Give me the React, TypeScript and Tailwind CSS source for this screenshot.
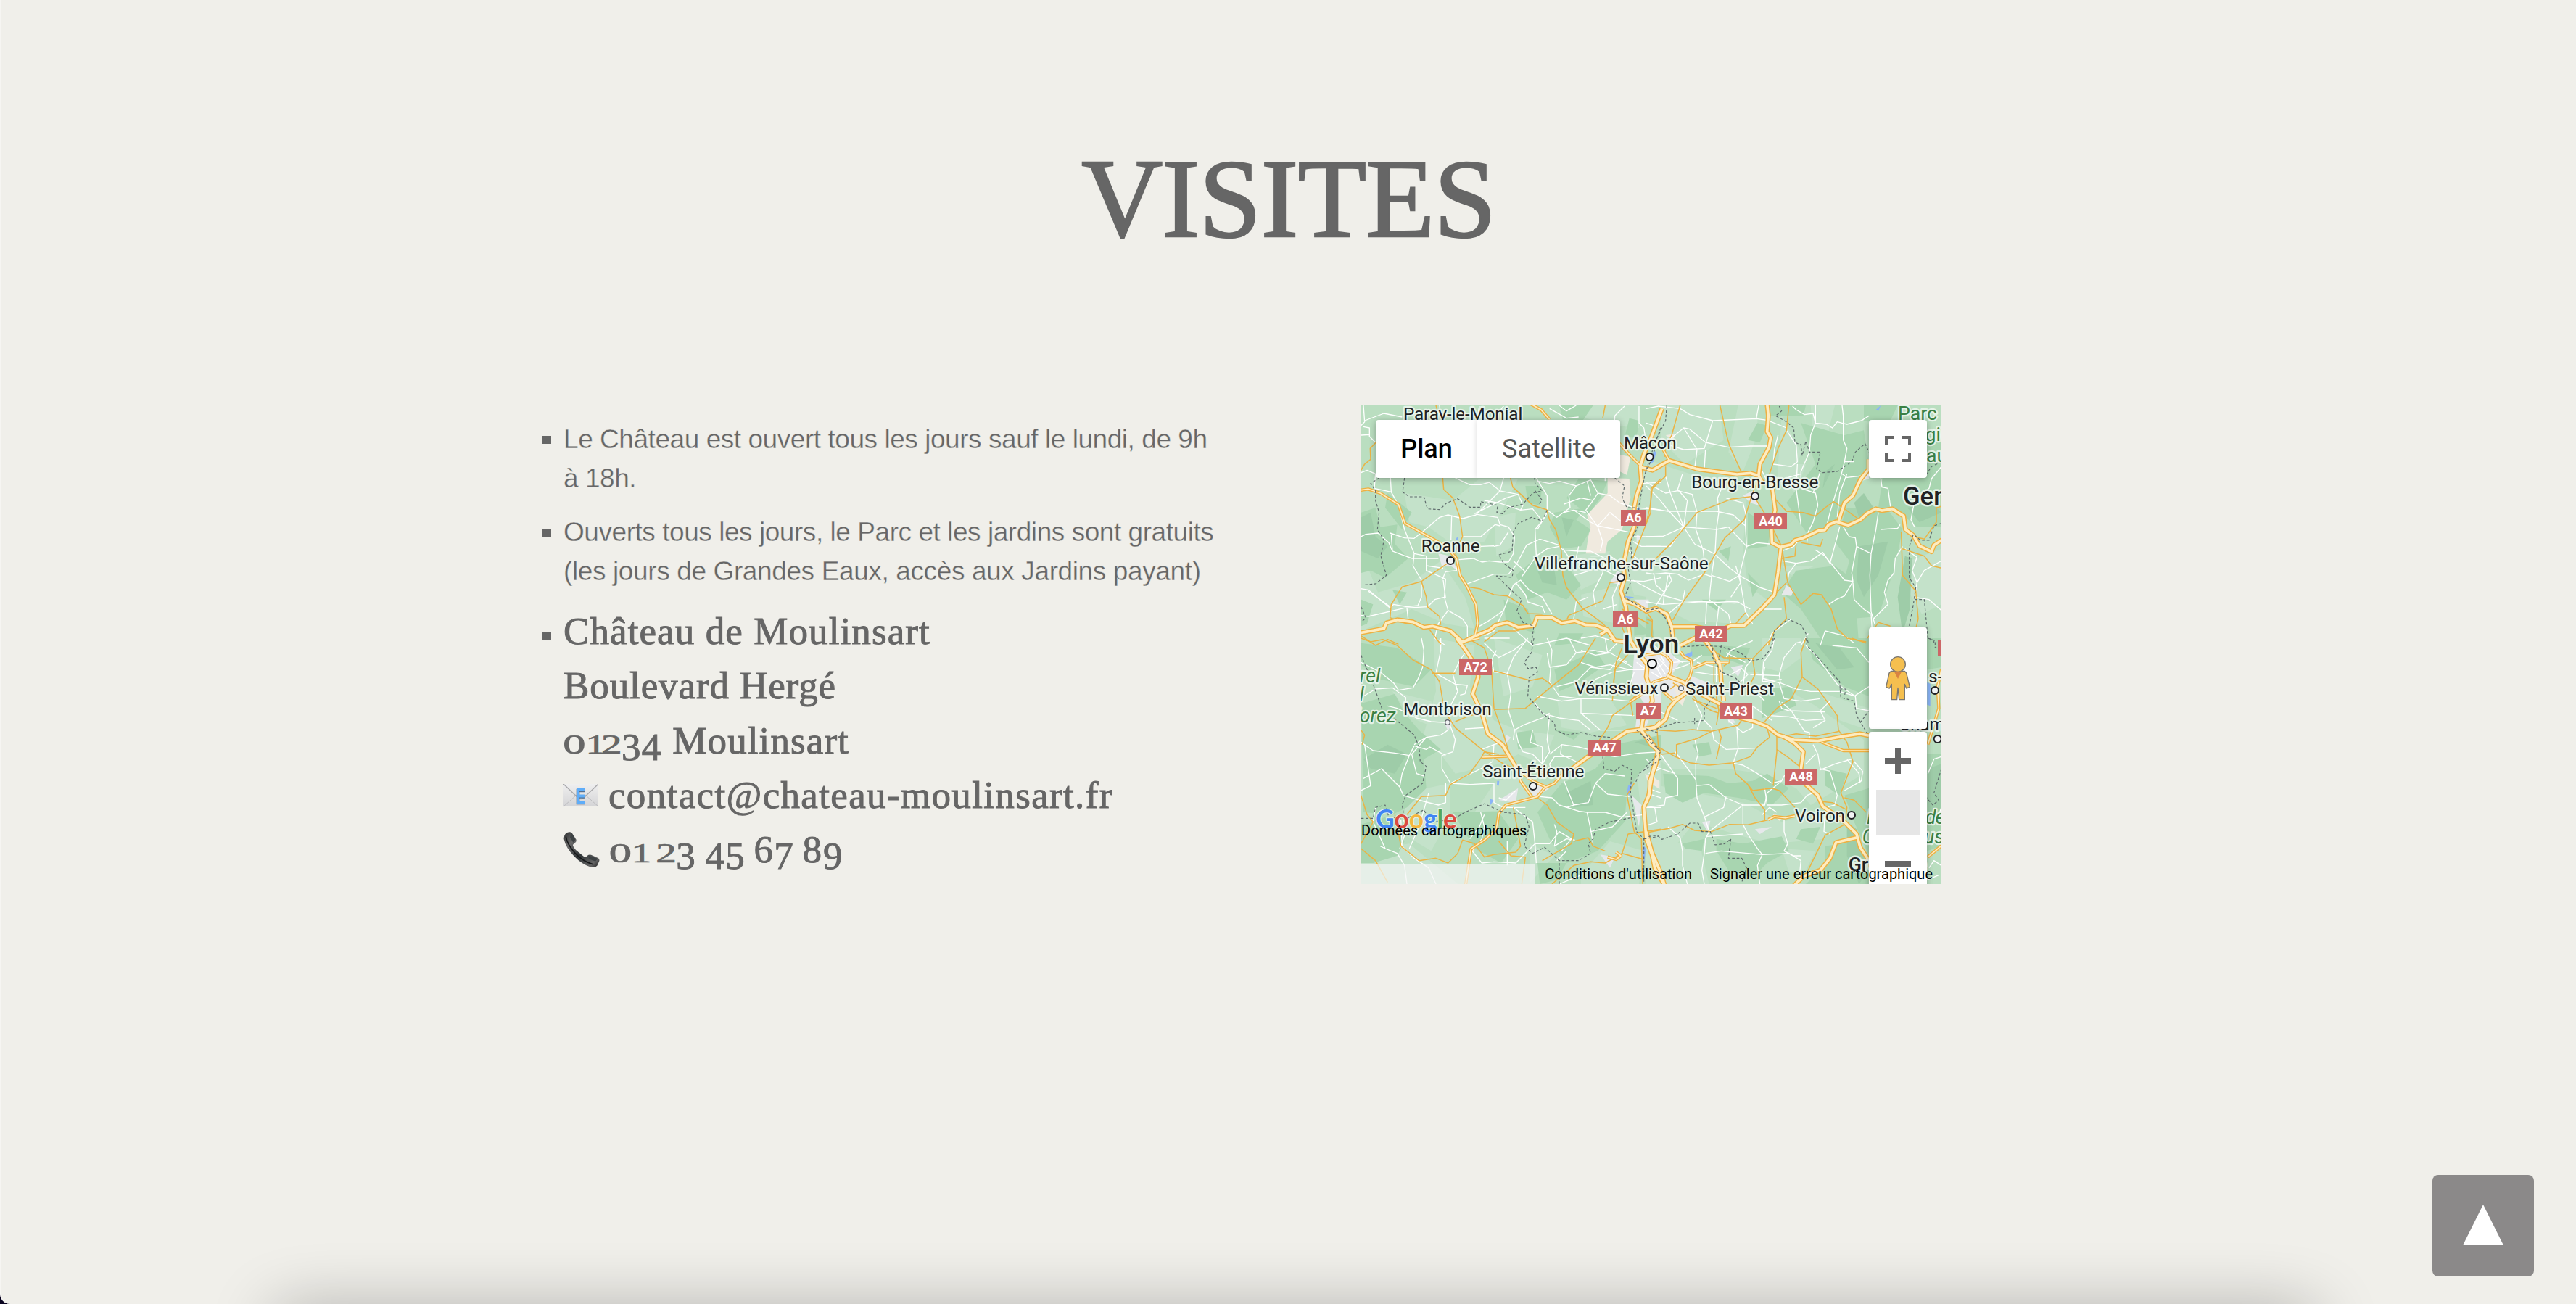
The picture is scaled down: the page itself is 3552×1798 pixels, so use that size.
import React from "react";

type Quad = "A" | "B" | "C" | "D" | "E";

const origin: Record<Quad, string> = {
  A: "translate(-17 -19) scale(0.33333)",
  B: "translate(393 -19) scale(0.33333)",
  C: "translate(-17 321) scale(0.33333)",
  D: "translate(393 321) scale(0.33333)",
  E: "translate(303 221) scale(0.33333)",
};

const wide: [Quad, string][] = [
  ["A", "M45 998L145 980L155 957L200 944L265 953L310 975L345 970L420 990L470 1037L525 1010L583 985L605 967L655 955L700 975L765 968L778 933L840 935L880 957L935 948L980 965L1020 966L1070 985L1100 1030L1150 1035M1070 985L1040 1005"],
  ["A", "M1295 70L1250 190L1220 260L1205 310L1210 370L1190 430L1180 480L1180 560L1155 620L1135 720L1140 770L1125 825L1145 890L1155 960L1165 1030L1190 1070L1235 1130L1230 1180L1250 1240L1255 1280L1215 1360L1210 1400L1250 1460L1280 1485L1255 1580L1240 1670L1220 1720L1230 1850L1255 1920L1265 1970L1310 2050"],
  ["A", "M1205 312L1255 325L1325 285L1440 320L1605 342L1660 337L1695 348L1710 375L1750 385L1763 490L1748 560L1750 625L1785 643L1830 632L1845 615L1880 605L1945 574L1968 573L1985 550L2015 538L2065 553L2115 530L2145 503L2180 485L2205 492L2248 485L2295 515L2302 570L2335 595L2360 638L2410 662L2420 635L2455 612"],
  ["B", "M500 50L505 100L500 165L515 190L508 230L470 300L465 345"],
  ["B", "M795 538L820 460L855 430L885 365L921 320L921 280"],
  ["B", "M557 643L545 750L530 840L480 895L405 967L350 968L300 990L200 972L105 972L85 920L40 897L0 908L-45 880L-100 860"],
  ["B", "M105 972L112 1040"],
  ["B", "M140 1050L220 1010L270 985"],
  ["C", "M445 0L480 45L530 120L535 160L512 230L550 310L575 395L635 440L665 490L705 555"],
  ["C", "M1290 345L1265 370L1190 380L1150 385L1090 425L1040 460L990 490L955 515L930 535L885 560"],
  ["D", "M0 375L45 365L80 335L95 290L120 260L165 225M85 155L150 180L215 225L320 280L390 330L450 345L500 365L545 400L610 420L710 425L800 408L885 395L921 403"],
  ["D", "M0 400L50 470L40 520L15 590L15 640L0 680"],
  ["D", "M565 405L615 435L650 470L640 540L655 600L710 650L730 695L820 760L870 810L885 865L915 910L940 960"],
  ["D", "M870 825L785 845L760 910L720 960L650 985L610 1025"],
  ["D", "M240 5L280 60L305 110L310 180L320 260"],
  ["D", "M0 800L25 890L60 970L75 1020"],
];

const medium: [Quad, string][] = [
  ["A", "M45 408L80 403L130 420L205 467L232 545L345 608L400 640L445 690L460 760L488 805L525 880L533 960L520 1015"],
  ["A", "M1115 210L1160 260L1205 305M750 50L795 75L830 115"],
  ["B", "M70 240L95 285"],
  ["C", "M755 655L710 590L705 550L760 590L815 615"],
  ["C", "M885 560L850 600L810 618L780 655L650 690L620 725L610 790L560 835L505 872L495 940L483 1020"],
  ["C", "M550 492L655 488M1070 905L1105 915L1125 900L1105 885M470 15L540 0M1080 0L1140 20"],
  ["D", "M725 430L815 465L925 465M505 750L530 738L575 743L615 735"],
  ["D", "M1221 130L1205 200L1210 290L1165 440M1225 855L1165 905"],
  ["E", "M355 375L375 400L370 440L355 465L300 480M410 355L425 375L455 390L460 425L450 460L435 480M460 425L520 400L610 400M300 480L285 510L200 565M265 370L330 360L355 375M340 520L380 555L420 535"],
];

const orange: [Quad, string][] = [
  ["A", "M112 210L88 235L90 280L65 300L50 325M388 357L392 405L430 440L458 515L470 600L440 660L445 690M668 357L678 395L760 470L818 488L830 530L855 570L878 655L885 760L900 810L965 895L1045 955L1075 985"],
  ["A", "M490 808L540 815L600 840L655 845L720 885L740 918L800 920M405 712L300 785L220 808L175 880L170 935L240 960M300 785L320 850L325 890L375 930L380 965M360 57L365 75M1060 57L1050 110M1290 360L1250 400L1248 500L1170 700"],
  ["A", "M50 1010L110 1050L160 1025L205 1045M330 980L360 1020L380 1045M560 1035L620 990L690 990L765 968M903 940L910 925L960 905L990 890L1050 865L1080 790L1125 785M1130 900L1240 960"],
  ["B", "M140 57L105 180L80 230L75 270M305 57L335 190L345 225L392 330M590 57L580 160L545 235L510 340M470 350L440 420L405 530L325 605L240 750L155 865L110 945"],
  ["B", "M80 310L80 350L25 400L15 480L0 545M450 432L350 445L210 500L110 620L0 730M450 440L500 520M520 430L580 495L650 500L700 515L740 480L775 455L820 485L875 525M520 560L560 640L585 790L640 880L690 835L725 840L765 900L790 980L830 1020L910 1035"],
  ["B", "M560 690L615 680L620 630M640 625L720 640L730 610M570 850L580 940L530 990L505 1050M530 840L580 790M410 915L370 960M0 940L25 950M1221 475L1200 480L1200 540L1150 610L1110 600M1055 580L1060 760L1115 825L1125 940L1110 1000M1060 650L1150 680L1180 720L1221 730M915 1020L960 955L1010 970"],
  ["C", "M50 0L90 15L140 5L200 30L265 90L340 130L375 180L395 300L440 370L550 460L640 520L700 545M345 145L440 145M490 0L560 40L590 130L600 290L640 400L665 480M600 295L730 290L850 190L950 110L1020 0M600 135L750 175L800 165L840 195"],
  ["C", "M440 345L500 320L550 310M420 605L500 560L550 490L560 470L620 480M420 605L400 650L300 655L240 730M50 650L75 730L100 760L50 850M50 870L110 920L160 1010M190 730L215 860L290 920L360 910L410 930L450 890L470 835L520 850L560 905L600 895L690 885L710 860L680 700"],
  ["C", "M780 660L820 690L860 760L930 810L920 850L800 920M620 840L670 900L730 905L715 1017M840 1017L930 940L1000 925L1060 930L1130 890L1220 915M930 840L990 825L1010 860L1060 880M1130 890L1155 810L1290 790M1030 430L1070 370L1090 320L1160 270L1210 200M1160 60L1100 130L1090 260M1180 600L1150 650L1180 800L1210 830L1215 1017M50 380L65 400L55 440"],
  ["D", "M45 380L50 450L120 490L180 515L260 525L360 515L430 490L460 450L510 410L500 370L450 345M50 380L120 385L190 378L270 385L380 360L400 330M270 385L210 415L125 440L125 490M300 380L310 410L290 500M360 515L370 560L420 605L450 660L490 710L490 750M420 605L440 630L520 620L550 630L615 700"],
  ["D", "M540 405L540 470L525 610M540 460L590 495L640 535M660 0L640 60L645 160L600 250L540 290L490 345M645 160L710 210L790 320L795 380L830 430L855 510L805 640L830 700L825 745M570 405L620 395L700 405L800 385M820 660L860 670L910 720M720 675L770 680L830 710M740 815L660 980M740 815L830 765"],
  ["D", "M0 805L100 785L150 770L200 795L270 800L345 770L420 772L510 750M245 30L320 80L440 85L520 0M440 85L450 150L430 190M345 70L345 100L320 115M280 60L280 180L300 300L290 360M190 250L270 300L300 310M850 0L910 20M60 480L120 475"],
  ["E", "M150 205L180 280M295 225L293 290L320 320M205 565L215 620M440 500L480 560L560 590M560 540L570 600M170 340L145 400L135 480L150 540M270 190L295 225M380 485L420 510M370 510L395 490"],
];

const white: [Quad, string][] = [
  ["A", "M60 57L65 125L50 140M65 120L145 90L220 105M60 145L85 150L85 185L110 210M50 180L85 178M50 335L75 325L110 340L105 400L175 415L172 357M175 415L205 470L230 570L270 670L265 720L300 780L300 850L285 885L240 890L185 880L170 895L80 820L50 815"],
  ["A", "M440 357L500 385L545 385L580 375L625 410L525 510L470 525L410 510L375 520L310 575L270 607L230 605L170 585M425 515L422 615M620 410L700 425L650 440L520 505M700 425L720 470L710 490L620 460L560 450M710 490L760 485L800 535L770 570L775 680L730 745L715 765"],
  ["A", "M530 508L615 520L625 550L660 560L685 600L680 670L660 705L625 705L580 700L550 705L515 690L455 695M470 600L545 600L605 550L625 555M600 640L625 635L660 580M545 640L600 638M625 410L640 357"],
  ["A", "M50 600L70 590L120 585L165 625L180 660L260 690L370 690M270 670L320 680L320 740L400 775L395 850L355 860L325 890L230 895L80 930L50 925M395 850L410 905L470 940L490 970L490 1020M170 890L80 825M320 720L390 730M180 660L175 590M450 700L445 740L400 745L385 780M390 780L400 855"],
  ["A", "M490 795L600 755L660 755L690 720L735 635L790 610L870 635L885 655L950 660L1000 660L1060 690M680 800L665 840L640 905L605 930L575 950L540 970M690 790L730 840L740 870L800 890L810 915M680 800L710 780L745 820L800 850L840 920M730 745L680 700"],
  ["A", "M775 357L820 430L820 500L800 535M780 370L830 380L870 370L940 390L910 430L915 480L860 520L820 490M940 390L1000 365L1030 420L1010 450L960 440L890 465M1030 420L1080 430L1120 460L1180 480M1010 450L980 490L1030 560L1050 620L1040 660M930 490L1000 540L1030 555L1155 580M1030 555L1080 500L1130 540M1000 430L985 370M890 500L930 490L980 500"],
  ["A", "M820 500L780 570M870 640L820 650L775 680M885 650L920 700L960 690L990 720L1060 740L1120 770M1060 690L1050 750L1010 830L1020 890M930 760L1000 740M950 640L940 690M1120 780L1090 850L1095 905M1095 200L1100 100L1140 60M1200 60L1200 130L1220 150L1225 180M1170 600L1290 600M1175 620L1210 640L1290 640M1150 650L1200 700L1290 700M1130 780L1220 785L1290 770M1190 480L1290 490M1210 380L1290 375M1060 370L1060 300"],
  ["A", "M830 70L900 110L950 105M870 57L900 80L940 57M640 60L600 110M540 60L530 110M375 57L380 110M1140 720L1080 680L1000 680M930 940L940 870L990 850M240 895L245 940M640 905L600 990L560 1010M410 905L370 960L355 1020L400 1050M680 980L760 1050L900 1020L1000 1050"],
  ["B", "M0 70L50 60L140 70L180 95L275 120L455 112L465 57M275 120L240 235L155 240L75 215L155 150L210 240L200 320M155 150L180 155L245 210L340 230L430 225L510 225M455 112L500 118L580 150M480 330L500 370M0 130L30 140M245 240L240 320"],
  ["B", "M0 375L80 420L130 410L190 425L210 500L205 570L235 655L240 700M0 480L90 495L150 495L290 495L360 510L410 555L415 640L385 760L410 910L440 960M0 600L70 598L155 560L290 570L300 500L295 440L330 355M155 560L90 490L50 440L0 390M155 560L100 640L0 640M155 560L200 630L280 670L345 730L385 760L470 810L530 830"],
  ["B", "M155 560L170 450L130 405L150 340M290 570L285 660L270 760L345 785L385 760M95 495L155 560L100 420L80 350M0 750L30 755L80 750L130 755L175 780L240 755L270 765L260 860L340 920L350 960M30 750L40 800L75 830L105 780L95 755M75 830L70 880L150 875L280 865L380 870L430 900M415 640L460 625L510 630M330 440L400 460L410 500L410 555M290 570L340 560L415 640M0 870L70 880"],
  ["B", "M580 160L620 220L625 290L600 310L525 300M525 300L530 240L545 180M605 60L620 75L655 95L690 90L700 130L680 180L675 250L640 330L640 400L700 420L710 470L690 540L670 580L665 620M700 57L700 130L745 135L770 150L790 125L830 135L890 120L921 100M810 57L815 100L815 200L830 235L820 290L860 290M525 370L570 360L640 340"],
  ["B", "M820 290L805 350L760 500L745 560M830 340L800 420L790 520M720 330L690 420M810 340L830 355L921 345M970 357L975 395L1000 400L1010 475M815 560L840 600L865 605L870 640L930 670L925 760L930 910L945 960M870 640L850 750L855 785L820 845L785 860L755 880M700 655L740 680L820 780L855 785M960 500L950 570L930 670M970 570L1040 565L1050 550M560 660L610 640L635 610M640 550L620 400L625 300"],
  ["B", "M585 780L590 750L620 710L680 700L730 665L760 710L790 600L800 560M1221 310L1180 360L1170 400L1110 450L1095 530L1110 560M1070 650L1120 685L1100 740L1120 790L1110 850L1170 860L1221 905M1120 790L1150 740L1221 700M1060 640L1030 690L1025 750L1000 780L985 830L1000 880L940 940M855 790L860 860L900 900L930 920L935 1000L980 990M560 900L480 900M600 940L520 1000L500 1050M740 990L720 1050M740 990L820 1010L860 1040M640 1050L670 1000M560 700L620 710"],
  ["C", "M300 0L310 50L305 120L285 170L265 205L205 215L185 185L130 140L50 100M380 0L380 50L360 145L440 190L450 220L420 280L415 350L440 420L430 470L385 485L385 540L420 600L500 605L600 600M415 350L340 345L280 330L200 290L160 280M60 240L110 210L180 205L235 245L230 320M50 430L100 465L190 475L250 485L270 445L320 460L335 450L400 485"],
  ["C", "M250 485L220 560L210 615L225 650L310 675L370 690L400 680L400 600M270 440L320 410L380 400L410 380M65 440L90 610L50 630M60 580L135 540L210 615M320 410L260 480L280 560L310 570M110 700L100 760L150 870L130 860M150 870L200 890L230 940L240 1017M215 750L220 860L270 910L330 950L360 1017M330 640L290 780L250 870M225 750L240 790L210 870"],
  ["C", "M440 190L490 195L480 230L460 235M450 220L430 150L460 90L480 60M480 375L560 370M610 50L590 90L600 140L655 145L670 230L660 300L685 380L680 420M740 0L680 80L655 145M560 20L620 80L680 50L720 20M685 380L720 360L800 330L830 310M550 460L600 440L635 430M600 440L595 510L545 540L420 600M690 380L700 430L720 470L760 480L800 520L830 470L820 420L830 320"],
  ["C", "M760 380L750 430L800 450L800 520M820 60L830 120L900 110L940 60L1010 50L1070 60L1120 10M830 180L870 240L960 250L960 310L1040 380L1150 380M860 200L940 180L1000 120L1080 130L1120 80M780 240L880 260L960 250L1060 250L1160 260M770 270L800 310L870 330L950 340L1000 380M1070 60L1060 0M910 0L940 60M820 0L840 50L830 180M960 310L1180 320"],
  ["C", "M665 0L560 0M830 480L880 440L950 450L990 460M880 440L875 480L940 510M840 560L830 520L850 490L920 490M1040 480L1100 490L1200 475L1290 470M890 590L930 690L900 700M930 690L990 680L1020 600L1060 560L1140 570M1020 600L1070 645L1160 655M790 655L840 660L870 690L950 715L985 720L1000 790L1010 850M985 720L1060 720L1130 740L1220 730M680 700L760 760L770 850L775 930"],
  ["C", "M770 850L830 850L870 800L920 830L880 880M850 770L860 800L850 860L900 830L935 835M600 600L600 680L640 700L730 700M545 720L560 780L550 830L510 880L550 930L600 925L690 930L770 850M560 730L540 780L500 830M655 840L655 940M700 545L740 540L820 560M690 630L650 670L620 660M860 920L900 880M1000 800L1090 780L1150 720M1220 700L1290 700M1235 620L1290 640M1240 560L1290 540M870 1017L960 980"],
  ["D", "M640 15L620 20L570 80L550 150L555 185L620 210L680 220L800 220M480 170L485 100L520 50L530 0M480 165L550 185L570 250L640 260L720 250M550 260L560 290L590 300L740 305M510 320L590 325L660 340L740 335M560 265L600 300L655 385L675 390L675 420M330 80L350 50L440 10M400 200L410 120L440 85M430 150L550 155"],
  ["D", "M240 340L270 370L280 420L330 460L450 455M340 340L375 370L400 390L440 370L440 280L520 340M375 370L380 455L360 515M60 480L95 530L130 580L130 650L80 660L75 690L0 700M120 470L205 585L205 510L215 480L200 415M205 585L210 660L245 750L260 800L400 690L490 690L500 640L560 590L570 570L640 550M205 610L260 605L330 660L400 690"],
  ["D", "M240 740L320 700L330 655M35 700L45 760L0 775M90 780L140 825L150 880L150 940L170 1017M260 800L245 830L240 890L230 960L240 1017M245 890L310 880L480 895L590 890L640 920L630 1017M400 690L400 770L420 810L460 870L480 895L460 940L470 1017M570 750L570 800L585 850L570 880L610 900L640 900M490 620L500 690L560 690L640 680L665 650L690 640M250 820L400 810"],
  ["D", "M350 515L400 525L460 560L520 600L560 590M690 440L710 480L720 540L760 550L790 650L780 690L740 700M760 260L720 300L740 340L690 370M800 220L865 240L870 290L921 300M860 240L921 200M660 30L700 70L790 190L865 240M830 500L880 560L885 600M860 510L895 550L890 590L820 630M720 545L780 520L850 500M740 700L735 800L760 810M770 30L870 40L921 100M700 480L660 520"],
  ["D", "M1165 560L1190 500L1221 490M1170 950L1190 920L1221 940M1200 760L1221 700M1210 980L1160 1000M0 500L30 530L120 560M540 720L510 700L480 730M0 640L60 660"],
  ["E", "M300 400L335 460M310 390L350 450M320 380L365 430M290 440L340 470M330 370L345 400L310 430M380 400L450 395M380 430L440 410L500 370M385 380L420 400M300 330L330 350M230 400L270 430L200 430L130 440L60 470M160 390L215 420M0 400L60 420L120 410L200 430M220 440L200 500L230 540M470 440L540 450L620 450M480 400L560 420L560 480M620 450L665 425L690 450L640 500M600 360L680 400M0 350L60 370L120 360L190 400M240 590L320 600L400 640"],
  ["E", "M215 60L290 100L330 120L420 145L520 150L640 155M360 40L350 100L300 180M430 100L420 150L360 200M520 150L515 240M570 170L560 250M640 0L660 70L620 130M90 180L150 160M0 300L60 290L130 310M470 560L500 620L480 680M700 500L760 560M760 420L750 480L830 470"],
];

const dashed: [Quad, string][] = [
  ["A", "M125 357L90 380L110 410L110 450L125 500L118 570L145 615L132 680L155 760L110 795L60 800M230 357L222 415L250 435L310 435L325 485L375 488L405 460L450 443L500 478L545 478L545 455L590 465L615 470L612 500L635 505L660 480L720 465L760 420L800 410L770 380L768 357"],
  ["A", "M770 410L800 450L780 470M820 490L800 535L755 520L700 545L680 580L675 660L620 675L640 710L680 740L675 768L610 762L670 820L715 860L695 905L720 955L765 970L755 1040M1100 357L1140 390L1130 440L1150 480L1190 480M1290 150L1260 230L1225 340L1200 470L1195 560L1165 620L1170 680L1155 730L1165 790L1140 850L1230 905L1290 895M50 890L70 935L55 950"],
  ["B", "M85 57L80 120L45 190L30 260L0 330M550 60L560 80L535 100L580 125L610 150L615 210L640 220L645 265L660 205L675 250L720 250L705 320L730 335L790 330L850 290L865 250L905 215L921 250M1221 290L1180 310L1160 340M1221 545L1190 555L1170 615L1135 615L1105 590L1088 640L1088 770L1115 810L1105 880L1088 970M1110 860L1150 860L1165 1020L1190 1030L1190 1050"],
  ["B", "M0 910L40 895L75 930L100 980L105 1040M520 1050L530 990L585 940L640 965L660 1000L670 1040"],
  ["C", "M50 70L100 190L140 300L210 350L270 400L290 450L295 510L320 530L305 600L235 650L220 690L230 750L310 710L340 760L430 750L480 720L560 685L640 720L730 730L745 780L725 860L760 890L810 865L870 920L950 920L1000 890L990 850L1010 830L1020 790L1080 760L1180 740M50 745L100 745L110 700L150 690L165 740L225 745"],
  ["C", "M765 0L755 60L725 100L740 125L775 120L780 140L745 165L740 240L800 310L850 350L855 380L900 400L960 390L1020 405L1080 410M1050 490L1055 540L1100 550L1130 525L1170 545L1165 640L1190 800L1220 830L1220 1010M1290 500L1200 560L1185 600M1190 380L1280 460M1220 830L1280 820M870 1017L870 930"],
  ["D", "M0 375L45 390L45 375L120 350L190 345L240 340L240 290L280 240M200 330L200 355M150 35L240 30L310 35L390 60L430 95L480 85L510 50L530 0M275 40L275 80L310 140L370 165L395 190M310 30L300 90M660 0L665 30L720 90L800 180L805 245L860 260L870 320L915 395M800 210L825 210L820 240M885 350L921 300"],
  ["D", "M10 820L45 815L65 832L130 810L180 765L215 765L230 800L265 800L285 855L325 850L350 830L340 910L395 910L415 950L395 1010M0 400L60 470L0 530M1165 0L1195 10L1195 40L1221 40M1221 540L1190 640L1210 670L1185 690L1160 660"],
];

const light: [Quad, string][] = [
  ["A", "M230 420L430 450L540 360L700 360L640 480L560 620L440 640L330 560L250 540ZM600 520L690 500L680 640L610 680ZM51 660L120 830L260 790L380 700L480 850L520 980L400 960L260 900L51 990ZM1220 320L1290 310V860L1180 840L1140 720L1200 560ZM960 840L1120 800L1110 960L970 930ZM930 57L1200 57L1200 150L1100 140L980 110ZM900 680L1080 660L1040 780L960 820Z"],
  ["B", "M0 280L180 340L420 380L400 650L420 800L510 870L400 960L180 950L0 860ZM60 57L300 57L320 200L160 300L60 200ZM380 57L460 57L460 180L400 330L340 250ZM560 100L640 250L600 400L540 380ZM680 57L780 57L740 220L690 180ZM560 300L660 300L620 420L560 380ZM1090 700L1221 650V880L1140 920L1080 820ZM600 760L700 720L560 720Z"],
  ["C", "M350 0L520 30L500 200L600 340L700 380L850 400L800 520L700 480L620 520L440 560L380 480L300 430L360 220ZM180 220L340 260L380 380L260 330ZM230 640L420 600L420 740L340 880L240 820ZM600 600L690 560L780 660L640 710L520 720ZM600 0L800 70L760 200L640 240ZM860 250L1080 250L1150 360L1000 390L880 370ZM51 880L250 850L450 1017H51ZM960 980L1080 840L1220 880L1200 1017H960ZM1180 420L1290 420V1017L1240 950L1200 640ZM750 850L850 900L750 1010Z"],
  ["D", "M0 60L180 80L300 130L460 140L700 280L900 420L900 560L680 690L620 620L480 560L330 540L100 540L0 460ZM0 600L210 640L400 680L560 760L720 720L740 830L520 850L400 820L200 760L120 860L0 820ZM0 840L220 850L260 1017H0ZM560 870L700 880L660 960L590 970ZM480 0L640 0L640 80L560 140L480 120ZM710 220L921 290V380L800 340Z"],
];

const dark: [Quad, string][] = [
  ["A", "M51 500L110 480L130 560L200 550L190 630L245 690L150 770L90 740L51 750ZM160 420L260 500L220 570L150 480ZM850 500L980 480L940 530L1000 570L960 640L880 650L830 560ZM950 360L1070 370L1040 440L990 510L900 440ZM760 700L880 690L960 800L900 860L820 830L740 860L690 760ZM870 57H1010L960 130L900 180ZM730 390L800 390L790 470L740 460ZM1160 110L1200 120L1190 190L1140 190ZM640 860L740 900L770 1000L650 960ZM1180 940L1250 1000L1180 1010ZM870 1000L970 1000L940 1040L850 1050ZM51 860L100 880L75 960L51 970ZM180 820L240 830L210 880Z"],
  ["B", "M640 130L820 180L900 160L921 300L830 470L760 560L660 580L580 460L700 300ZM830 480L1000 490L1060 570L1030 720L960 930L840 940L800 850L840 700L780 620ZM620 740L780 720L860 780L880 1050H740L640 900L560 830ZM1000 200L1221 180V560L1120 560L1050 500L960 480ZM420 500L520 560L500 640L420 650ZM300 660L350 640L340 700ZM420 750L470 800L440 850ZM460 130L500 140L470 210L420 200ZM900 57L1040 57L1000 140L900 120ZM230 860L330 860L290 905ZM490 57L660 57L650 100L500 100ZM0 930L20 940L40 1050H0Z"],
  ["C", "M51 20L200 40L340 130L270 200L130 170L51 110ZM51 270L190 230L230 310L290 380L380 460L310 500L320 620L240 700L180 730L60 720ZM51 770L150 740L230 840L200 900L100 930L51 930ZM850 130L1020 50L1060 110L960 180L870 220ZM880 600L1020 540L1100 440L1290 400V470L1200 560L1150 640L1140 760L1030 880L900 930L830 830L780 720ZM690 390L760 380L780 450L700 460ZM430 720L620 720L700 830L630 930L520 870ZM850 380L960 390L930 420ZM780 930L900 930L860 1000L790 1017Z"],
  ["D", "M180 20L430 40L400 110L280 70L190 80ZM660 0L920 0V240L820 200L690 90ZM480 210L600 200L620 280L480 330ZM190 440L260 430L270 480L220 490ZM70 560L260 570L340 600L440 590L500 560L590 620L520 690L380 660L240 640L150 680L80 640ZM290 830L400 850L560 820L590 880L500 930L440 990L340 960L290 880ZM150 850L240 830L230 880L160 870ZM740 540L830 560L800 650L740 610ZM740 860L860 840L920 960V1017H660L740 940ZM640 790L720 780L690 850L620 830ZM1162 0H1221V120L1162 130ZM1162 480H1221V860L1162 880ZM820 650L921 620V900L860 760Z"],
];

const darker: [Quad, string][] = [
  ["A", "M51 520L90 500L110 600L160 640L120 690L51 660ZM880 520L930 530L900 600ZM780 740L850 740L860 800L800 790Z"],
  ["B", "M860 460L900 420L940 480L880 520ZM1080 480L1180 460L1221 500L1130 540ZM880 640L1000 620L960 760L900 850L870 780ZM1070 680L1100 690L1090 900L1060 1000L1040 850ZM740 330L780 300L730 400Z"],
  ["C", "M60 500L160 440L240 480L190 560L90 540ZM900 640L1000 590L1010 690L930 700ZM1180 430L1270 410L1250 450Z"],
  ["D", "M830 760L870 790L921 960L880 1017L830 900ZM1165 540L1221 520V700L1165 760ZM700 20L800 40L860 120L790 130Z"],
];

const urban: [Quad, string][] = [
  ["A", "M370 670L420 680L450 740L420 720L385 725ZM1180 860L1240 860L1235 910ZM1190 590L1210 600L1190 625ZM1110 740L1140 760L1130 800L1080 790Z"],
  ["B", "M400 430L440 410L465 470L430 460ZM580 800L610 820L600 845L560 840ZM890 370L921 330L921 360ZM0 860L15 870L0 880Z"],
  ["C", "M1180 60L1290 40L1290 300L1230 280L1170 200ZM740 620L800 600L830 620L770 660ZM1190 330L1240 340L1220 390L1185 370ZM620 670L700 620L690 680ZM1040 895L1100 905L1080 950ZM650 400L670 410L645 440ZM1170 650L1210 690L1200 780ZM395 350L430 340L410 385ZM960 500L1000 480L980 510Z"],
  ["D", "M0 40L100 60L140 100L100 160L130 250L60 220L0 200ZM170 150L270 190L210 215ZM330 290L370 350L340 350ZM230 760L265 755L255 800ZM450 790L520 780L470 810ZM350 120L400 110L380 160ZM30 510L60 520L40 540Z"],
];

const sand: [Quad, string][] = [
  ["A", "M1070 357L1160 360L1165 440L1130 570L1070 620L1060 670L980 670L990 600L1000 560L985 510L1070 420ZM1120 260L1165 270L1150 345L1120 330ZM375 670L405 680L400 710Z"],
  ["B", "M80 180L120 175L110 200ZM400 430L450 410L440 440Z"],
  ["C", "M1225 560L1285 590L1285 625L1235 590Z"],
  ["D", "M25 560L50 600L20 610ZM520 725L570 740L550 755ZM90 140L180 190L150 280L100 230Z"],
];

const water: [Quad, string][] = [
  ["B", "M950 75L970 57L960 80ZM30 245L42 250L30 290L15 300Z"],
  ["A", "M442 612L448 600L453 612ZM1190 480L1205 480L1200 510ZM1140 845L1180 850L1160 858Z"],
  ["C", "M613 590L622 590L620 610L612 608ZM585 665L600 670L585 690ZM1155 610L1170 600L1160 650L1150 640ZM1215 850L1228 870L1222 930L1213 900Z"],
  ["D", "M145 75L190 55L190 75L170 80ZM1162 180L1175 190L1175 280L1162 275Z"],
];

type Label = [Quad, number, number, string, number];
const labels: Label[] = [
  ["A", 228, 118, "Paray-le-Monial", 490],
  ["A", 1140, 236, "Mâcon", 215],
  ["A", 302, 664, "Roanne", 240],
  ["A", 770, 734, "Villefranche-sur-Saône", 717],
  ["B", 190, 398, "Bourg-en-Bresse", 522],
  ["C", 228, 319, "Montbrison", 362],
  ["C", 937, 230, "Vénissieux", 343],
  ["C", 556, 577, "Saint-Étienne", 417],
  ["D", 165, 233, "Saint-Priest", 363],
  ["D", 618, 758, "Voiron", 204],
];

const shields: [Quad, number, number, number, string][] = [
  ["A", 1125, 489, 105, "A6"],
  ["A", 1092, 909, 105, "A6"],
  ["B", 447, 504, 135, "A40"],
  ["B", 201, 969, 135, "A42"],
  ["C", 456, 87, 135, "A72"],
  ["C", 990, 420, 135, "A47"],
  ["C", 1188, 267, 102, "A7"],
  ["D", 303, 270, 135, "A43"],
  ["D", 573, 540, 135, "A48"],
  ["D", 1206, 6, 135, ""],
];

const dots: [Quad, number, number, number][] = [
  ["A", 1244, 270, 15],
  ["A", 420, 699, 15],
  ["A", 1125, 769, 15],
  ["B", 450, 432, 15],
  ["C", 1254, 105, 18],
  ["C", 408, 348, 10],
  ["C", 762, 612, 15],
  ["D", 75, 205, 15],
  ["D", 144, 207, 10],
  ["D", 849, 732, 15],
  ["D", 1194, 216, 15],
  ["D", 1205, 417, 15],
];

function Layer({ items, ...rest }: { items: [Quad, string][] } & React.SVGProps<SVGGElement>) {
  return (
    <g {...rest}>
      {items.map(([q, d], i) => (
        <path key={i} d={d} transform={origin[q]} />
      ))}
    </g>
  );
}

function MapTiles() {
  const line = { fill: "none", strokeLinejoin: "round" as const };
  const halo = {
    stroke: "#eef7f0",
    strokeOpacity: 0.85,
    strokeLinejoin: "round" as const,
    style: { paintOrder: "stroke" },
  };
  return (
    <svg className="block h-[660px] w-[800px]" viewBox="0 0 800 660" fontFamily="Roboto, sans-serif">
      <rect width="800" height="660" fill="#badec0" />
      <Layer items={light} fill="#c4e2ca" />
      <Layer items={dark} fill="#a8d5b0" />
      <Layer items={darker} fill="#9ecca8" />
      <Layer items={sand} fill="#f0eadf" />
      <Layer items={urban} fill="#e6e8eb" />
      <Layer items={water} fill="#8ab4f8" />
      <Layer items={white} {...line} stroke="#ffffff" strokeWidth="4" />
      <Layer items={orange} {...line} stroke="#ebb344" strokeWidth="4.5" />
      <Layer items={medium} {...line} stroke="#efb040" strokeWidth="13" />
      <Layer items={wide} {...line} stroke="#efb040" strokeWidth="20" />
      <Layer items={medium} {...line} stroke="#fdecc0" strokeWidth="5" />
      <Layer items={wide} {...line} stroke="#fdecc0" strokeWidth="11" />
      <Layer items={dashed} {...line} stroke="#5f6b6c" strokeWidth="3.5" strokeDasharray="11 8" />

      {dots.map(([q, x, y, r], i) => (
        <circle key={i} transform={origin[q]} cx={x} cy={y} r={r} fill="#f1f3f4" stroke={r < 12 ? "#5f6368" : r > 16 ? "#000" : "#202124"} strokeWidth={r < 12 ? 4 : 6} />
      ))}
      {labels.map(([q, x, y, t, w]) => (
        <text key={t} transform={origin[q]} x={x - 3} y={y} textLength={w + 3} fontSize="73" fill="#202124" strokeWidth="13" {...halo}>
          {t}
        </text>
      ))}
      <g fontWeight="500" fill="#202124" strokeWidth="15" {...halo}>
        <text transform={origin.C} x="1135" y="61" fontSize="105" textLength="231" lengthAdjust="spacingAndGlyphs">Lyon</text>
        <text transform={origin.B} x="1062" y="468" fontSize="104">Genève</text>
        <text transform={origin.D} x="836" y="962" fontSize="80">Grenoble</text>
      </g>
      <g fill="#202124" fontSize="72" strokeWidth="13" {...halo}>
        <text transform={origin.D} x="1168" y="182">s-les-Bains</text>
        <text transform={origin.D} x="1046" y="382">Chambéry</text>
      </g>
      <g fill="#3a8044" fontSize="80" strokeWidth="13" {...halo}>
        <text transform={origin.B} x="1041" y="117">Parc</text>
        <text transform={origin.B} x="1062" y="205">Régional</text>
        <text transform={origin.B} x="1101" y="290">Haut-Jura</text>
        <g fontStyle="italic">
          <text transform={origin.C} x="130" y="183" textAnchor="end">naturel</text>
          <text transform={origin.C} x="62" y="258" textAnchor="end">régional</text>
          <text transform={origin.C} x="194" y="349" textAnchor="end">Livradois-Forez</text>
          <text transform={origin.D} x="912" y="768" textLength="400">Massif de la</text>
          <text transform={origin.D} x="893" y="850">Chartreuse</text>
        </g>
      </g>
      {shields.map(([q, x, y, w, t], i) => (
        <g key={i} transform={origin[q]}>
          <rect x={x} y={y} width={w} height="66" fill="#cc6767" />
          <text x={x + w / 2} y={y + 52} textAnchor="middle" fontSize="54" fontWeight="700" fill="#fff">
            {t}
          </text>
        </g>
      ))}
      <text transform={origin.C} x="111" y="786" fontSize="106" fontWeight="700" textLength="336" fontFamily="Lato, sans-serif" stroke="#e9f5ec" strokeWidth="6" style={{ paintOrder: "stroke" }}>
        <tspan fill="#4285f4">G</tspan>
        <tspan fill="#db4c3f">o</tspan>
        <tspan fill="#f4b73f">o</tspan>
        <tspan fill="#4285f4">g</tspan>
        <tspan fill="#54a85c">l</tspan>
        <tspan fill="#db4c3f">e</tspan>
      </text>
    </svg>
  );
}

function MapPanel() {
  return (
    <div className="relative h-[660px] w-[800px] shrink-0 overflow-hidden font-[Roboto,sans-serif]">
      <MapTiles />
      <div className="absolute left-[20px] top-[20px] flex h-[80px] overflow-hidden rounded-[4px] bg-white text-[36px] leading-[80px] shadow-[0_2px_8px_rgba(0,0,0,0.3)]">
        <button className="w-[140px] text-center font-medium text-black">Plan</button>
        <button className="w-[197px] text-center text-[#565656] shadow-[0_0_8px_rgba(0,0,0,0.18)]">Satellite</button>
      </div>
      <div className="absolute left-[700px] top-[20px] flex h-[80px] w-[80px] items-center justify-center rounded-[4px] bg-white shadow-[0_2px_8px_rgba(0,0,0,0.3)]">
        <svg className="size-[36px]" viewBox="0 0 18 18" fill="#666">
          <path d="M0 0v6h2V2h4V0zM16 0h-4v2h4v4h2V0zM16 16h-4v2h6v-6h-2zM2 12H0v6h6v-2H2z" />
        </svg>
      </div>
      <div className="absolute left-[700px] top-[306px] flex h-[140px] w-[80px] items-center justify-center rounded-[4px] bg-white shadow-[0_2px_8px_rgba(0,0,0,0.3)]">
        <svg className="h-[62px] w-[36px]" viewBox="984 72 108 186">
          <g fill="#f5bf4f" stroke="#7b7770" strokeWidth="4" strokeLinejoin="round">
            <path d="M1010 136H1066L1073 144L1087 202L1073 207L1066 190V254H1043L1038 205L1034 254H1012V190L1003 207L989 202L1002 144Z" />
            <circle cx="1038" cy="108" r="31" />
          </g>
          <path d="M1022 137H1054L1038 168Z" fill="#d98341" />
        </svg>
      </div>
      <div className="absolute left-[700px] top-[450px] flex h-[220px] w-[80px] flex-col items-center rounded-[4px] bg-white pt-[22px] shadow-[0_2px_8px_rgba(0,0,0,0.3)]">
        <svg className="size-[36px]" viewBox="0 0 18 18" fill="#666">
          <path d="M18 7h-7V0H7v7H0v4h7v7h4v-7h7z" />
        </svg>
        <div className="mt-[22px] h-[62px] w-[60px] bg-[#e6e6e6]" />
        <div className="mt-[36px] h-[8px] w-[36px] bg-[#666]" />
      </div>
      <div className="absolute left-0 top-[632px] h-[28px] w-[240px] bg-[#f5f5f5]/70" />
      <span className="absolute left-0 top-[572px] whitespace-nowrap text-[20px] leading-[28px] text-black">Données cartographiques</span>
      <div className="absolute bottom-0 right-[12px] flex gap-[25px] whitespace-nowrap text-[20px] leading-[28px] text-black">
        <span>Conditions d'utilisation</span>
        <span>Signaler une erreur cartographique</span>
      </div>
    </div>
  );
}

const digitClass: Record<string, string> = {
  "0": "inline-block w-[31px] text-center origin-[50%_72%] scale-x-[1.18] scale-y-[0.72]",
  "1": "inline-block w-[22px] text-center origin-[50%_72%] scale-x-[1.05] scale-y-[0.72]",
  "2": "inline-block w-[27px] text-center origin-[50%_72%] scale-x-[1.08] scale-y-[0.72]",
  "3": "inline-block w-[27px] text-center translate-y-[9px]",
  "4": "inline-block w-[29px] text-center translate-y-[9px]",
  "5": "inline-block w-[26px] text-center translate-y-[9px]",
  "6": "inline-block w-[29px] text-center",
  "7": "inline-block w-[26px] text-center translate-y-[9px]",
  "8": "inline-block w-[29px] text-center",
  "9": "inline-block w-[28px] text-center translate-y-[9px]",
};

function OldStyle({ children }: { children: string }) {
  return (
    <>
      {children.split("").map((c, i) => (
        <span key={i} className={digitClass[c]}>
          {c}
        </span>
      ))}
    </>
  );
}

function EmailIcon() {
  return (
    <svg className="mr-[14px] h-[32px] w-[48px] shrink-0" viewBox="0 0 48 32">
      <defs>
        <linearGradient id="paper" x1="0" y1="0" x2="0" y2="1">
          <stop offset="0" stopColor="#efefef" />
          <stop offset="1" stopColor="#d4d4d6" />
        </linearGradient>
      </defs>
      <rect width="48" height="31" fill="url(#paper)" />
      <path d="M0 31L18 15M48 31L30 15" stroke="#bdbdbf" strokeWidth="1" fill="none" />
      <path d="M0 0L20 19Q24 22 28 19L48 0" stroke="#a9a9ab" strokeWidth="1.3" fill="none" />
      <path d="M30 9H20V26H30M20 17.500H29" stroke="#55708f" strokeWidth="4.6" fill="none" />
      <path d="M30 8H20V25H30M20 16.500H29" stroke="#5fadf8" strokeWidth="4" fill="none" />
    </svg>
  );
}

function PhoneIcon() {
  return (
    <svg className="mr-[13px] h-[50px] w-[50px] shrink-0" viewBox="0 0 150 150">
      <defs>
        <linearGradient id="handset" x1="0" y1="0" x2="1" y2="1">
          <stop offset="0" stopColor="#2c2e2f" />
          <stop offset="0.25" stopColor="#6b6b6b" />
          <stop offset="0.55" stopColor="#2f3436" />
          <stop offset="0.85" stopColor="#666" />
          <stop offset="1" stopColor="#1d1d1d" />
        </linearGradient>
      </defs>
      <path d="M8 8Q22-3 34 3L52 31Q55 40 48 45L39 53Q38 60 51 75L85 103Q93 107 99 98Q105 93 114 95L143 108Q151 113 147 123L139 140Q130 150 113 146Q78 136 45 102Q8 64 2 30Q1 15 8 8Z" fill="url(#handset)" />
      <path d="M10 20Q14 50 48 88Q80 122 120 134" stroke="#17191a" strokeWidth="5" fill="none" />
      <path d="M33 4L50 32L40 44L27 22ZM104 98L142 110L132 122L104 112Z" fill="#3d4244" />
    </svg>
  );
}

function Item({ children, bullet, className = "" }: { children: React.ReactNode; bullet: string; className?: string }) {
  return (
    <li className={`flex ${className}`}>
      <span className={`mr-[17px] h-[11px] w-[12px] shrink-0 bg-[#666] ${bullet}`} />
      <div className="whitespace-nowrap">{children}</div>
    </li>
  );
}

export default function App() {
  return (
    <div className="relative h-[1798px] w-full overflow-hidden bg-[#0a0420]">
      <main className="h-full rounded-bl-[14px] border-l-2 border-[#f6f5f2] bg-[#f0efea] text-[#666]">
        <h1 className="pt-[189px] text-center font-['Liberation_Serif',serif] text-[155px] leading-[171px] tracking-[-0.8px] [-webkit-text-stroke:2.5px_#666]">
          VISITES
        </h1>
        <div className="mt-[199px] flex pl-[746px]">
          <ul className="w-[1129px] pt-[20px]">
            <Item bullet="mt-[22px]" className="font-['Liberation_Sans',sans-serif] text-[37px] leading-[54px]">
              <p className="tracking-[-0.45px] [-webkit-text-stroke:0.3px_#f0efea]">
                Le Château est ouvert tous les jours sauf le lundi, de 9h
                <br />à 18h.
              </p>
            </Item>
            <Item bullet="mt-[22px]" className="mt-[20px] font-['Liberation_Sans',sans-serif] text-[37px] leading-[54px]">
              <p className="tracking-[-0.45px] [-webkit-text-stroke:0.3px_#f0efea]">
                Ouverts tous les jours, le Parc et les jardins sont gratuits
                <br />
                <span className="tracking-[-0.38px]">(les jours de Grandes Eaux, accès aux Jardins payant)</span>
              </p>
            </Item>
            <Item bullet="mt-[39px]" className="mt-[18px] font-['Liberation_Serif',serif] text-[53px] leading-[75.3px] [-webkit-text-stroke:1px_#666]">
              <p className="tracking-[1.1px]">Château de Moulinsart</p>
              <p className="tracking-[0.9px]">Boulevard Hergé</p>
              <p className="tracking-[1.1px]">
                <OldStyle>01234</OldStyle> Moulinsart
              </p>
              <p className="flex items-center tracking-[1.35px]">
                <EmailIcon />
                contact@chateau-moulinsart.fr
              </p>
              <p className="flex items-center">
                <PhoneIcon />
                <span className="[word-spacing:-1.2px]">
                  <OldStyle>01</OldStyle> <OldStyle>23</OldStyle> <OldStyle>45</OldStyle> <OldStyle>67</OldStyle> <OldStyle>89</OldStyle>
                </span>
              </p>
            </Item>
          </ul>
          <MapPanel />
        </div>
      </main>
      <div className="absolute left-[375px] right-[355px] top-[1808px] h-[60px] rounded-[30px] shadow-[0_0_90px_rgba(0,0,0,0.33)]" />
      <button aria-label="Haut de page" className="absolute left-[3354px] top-[1620px] flex h-[140px] w-[140px] items-center justify-center rounded-[8px] bg-[#8b8989]">
        <svg className="mb-[2px] h-[56px] w-[56px]" viewBox="0 0 56 56">
          <path d="M28 0L56 56H0Z" fill="#fff" />
        </svg>
      </button>
    </div>
  );
}
